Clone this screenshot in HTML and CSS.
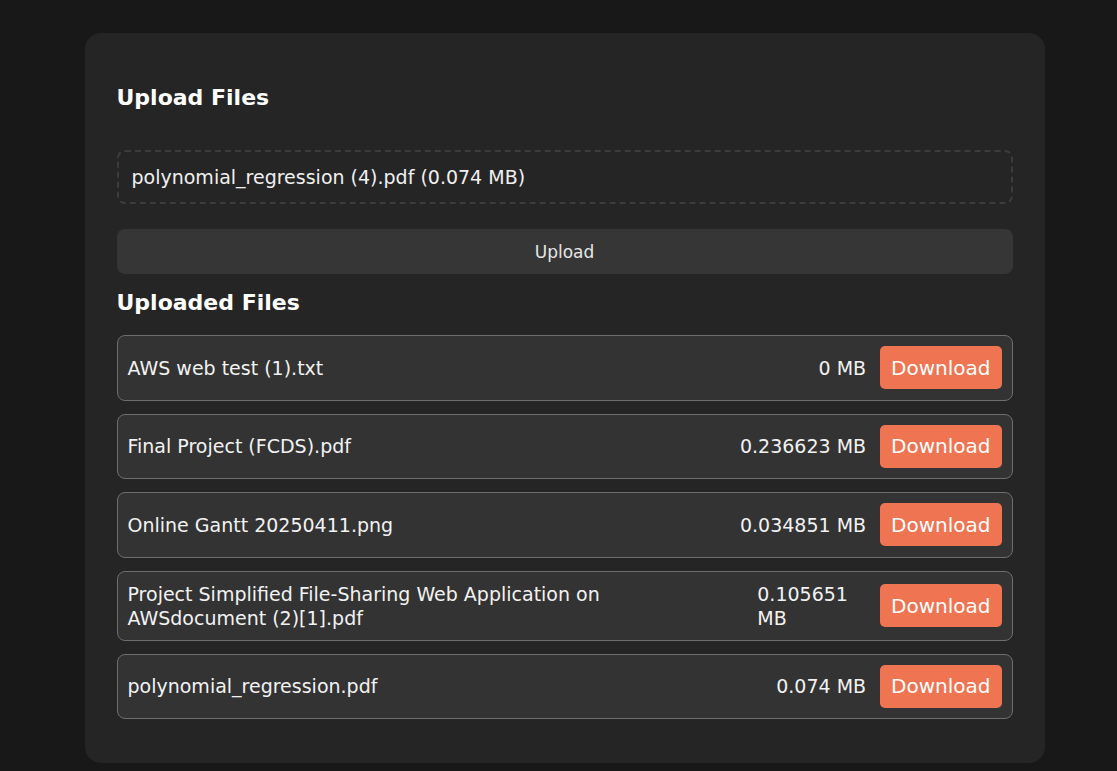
FILE: index.html
```html
<!DOCTYPE html>
<html lang="en">
<head>
<meta charset="utf-8">
<title>File Sharing</title>
<link rel="stylesheet" href="styles.css">
</head>
<body>
<main class="card">
  <h2 class="title">Upload Files</h2>
  <div class="dropzone">polynomial_regression (4).pdf (0.074 MB)</div>
  <button class="upload-btn">Upload</button>
  <h2 class="title title-list">Uploaded Files</h2>
  <ul class="files">
    <li class="file">
      <span class="name">AWS web test (1).txt</span>
      <span class="size">0 MB</span>
      <button class="dl">Download</button>
    </li>
    <li class="file">
      <span class="name">Final Project (FCDS).pdf</span>
      <span class="size">0.236623 MB</span>
      <button class="dl">Download</button>
    </li>
    <li class="file">
      <span class="name">Online Gantt 20250411.png</span>
      <span class="size">0.034851 MB</span>
      <button class="dl">Download</button>
    </li>
    <li class="file">
      <span class="name">Project Simplified File-Sharing Web Application on AWSdocument (2)[1].pdf</span>
      <span class="size">0.105651 MB</span>
      <button class="dl">Download</button>
    </li>
    <li class="file">
      <span class="name">polynomial_regression.pdf</span>
      <span class="size">0.074 MB</span>
      <button class="dl">Download</button>
    </li>
  </ul>
</main>
</body>
</html>
```
FILE: styles.css
```css
* { box-sizing: border-box; }
html, body { margin: 0; padding: 0; }
body {
  background: #181818;
  font-family: "DejaVu Sans", "Open Sans", sans-serif;
  color: #f2f2f2;
  padding: 33px 0 0 12px;
}
.card {
  width: 960px;
  margin: 0 auto;
  background: #252525;
  border-radius: 16px;
  padding: 42px 32px 44px;
}
.title {
  margin: 0;
  font-size: 22px;
  font-weight: 700;
  color: #ffffff;
  line-height: 46px;
}
.dropzone {
  margin-top: 29px;
  height: 54px;
  border: 2px dashed #3c3c3c;
  border-radius: 8px;
  padding: 0 13px;
  display: flex;
  align-items: center;
  font-size: 19px;
  color: #f0f0f0;
}
.upload-btn {
  display: block;
  width: 100%;
  margin-top: 25px;
  height: 45px;
  border: none;
  border-radius: 8px;
  background: #363636;
  color: #e6e6e6;
  font-family: inherit;
  font-size: 17px;
}
.title-list { margin-top: 6px; line-height: 46px; }
.files {
  list-style: none;
  margin: 9px 0 0;
  padding: 0;
  display: flex;
  flex-direction: column;
  gap: 13px;
}
.file {
  display: flex;
  align-items: center;
  gap: 14px;
  min-height: 65.5px;
  padding: 10px 10px 10px 10px;
  background: #333333;
  border: 1px solid #6e6e6e;
  border-radius: 8px;
  font-size: 19px;
  line-height: 24px;
}
.name { flex: 0 1 auto; margin-right: auto; }
.size { flex: 0 1 auto; }
.dl {
  flex: none;
  height: 43px;
  padding: 0 11px;
  border: none;
  border-radius: 5px;
  background: #ee7452;
  color: #ffffff;
  font-family: inherit;
  font-size: 20px;
}
```
